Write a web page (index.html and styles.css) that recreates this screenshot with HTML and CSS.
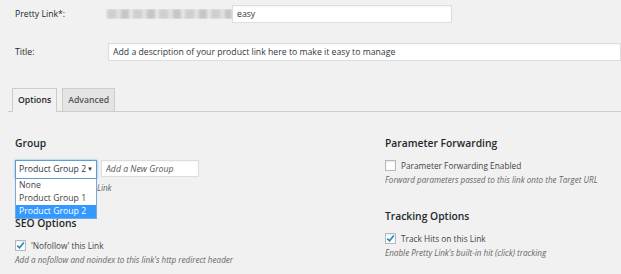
FILE: index.html
```html
<!DOCTYPE html>
<html lang="en">
<head>
    <meta charset="UTF-8">
    <title>Pretty Link - Edit Link</title>
    <link rel="stylesheet" href="styles.css">
</head>
<body>
    <div class="top-fields">
        <div class="field-row">
            <label class="field-label">Pretty Link*:</label>
            <div class="slug">
                <span class="slug-prefix"><span class="blur"></span></span>
                <input class="text-input slug-input" type="text" value="easy">
            </div>
        </div>
        <div class="field-row title-row">
            <label class="field-label">Title:</label>
            <input class="text-input title-input" type="text" value="Add a description of your product link here to make it easy to manage">
        </div>
    </div>

    <!-- Tabs -->
    <div class="tabs">
        <span class="tab active">Options</span>
        <span class="tab">Advanced</span>
    </div>

    <div class="options">
        <div class="col">
            <section class="group-section">
                <h3>Group</h3>
                <div class="group-controls">
                    <div class="select-wrap">
                        <div class="select">Product Group 2 <span class="caret">&#9660;</span></div>
                        <ul class="dropdown">
                            <li>None</li>
                            <li>Product Group 1</li>
                            <li class="selected">Product Group 2</li>
                        </ul>
                    </div>
                    <input class="text-input new-group" type="text" placeholder="Add a New Group">
                </div>
                <p class="desc group-desc">Link</p>
            </section>
            <section class="seo-section">
                <h3>SEO Options</h3>
                <label class="check">
                    <span class="box checked"><svg viewBox="0 0 12 12"><path d="M2.5 6.2 L5 8.6 L9.6 2.8" /></svg></span>
                    'Nofollow' this Link
                </label>
                <p class="desc">Add a nofollow and noindex to this link's http redirect header</p>
            </section>
        </div>
        <div class="col">
            <section class="param-section">
                <h3>Parameter Forwarding</h3>
                <label class="check">
                    <span class="box"></span>
                    Parameter Forwarding Enabled
                </label>
                <p class="desc">Forward parameters passed to this link onto the Target URL</p>
            </section>
            <section class="tracking-section">
                <h3>Tracking Options</h3>
                <label class="check">
                    <span class="box checked"><svg viewBox="0 0 12 12"><path d="M2.5 6.2 L5 8.6 L9.6 2.8" /></svg></span>
                    Track Hits on this Link
                </label>
                <p class="desc">Enable Pretty Link's built-in hit (click) tracking</p>
            </section>
        </div>
    </div>
</body>
</html>
```

FILE: styles.css
```css
* {
    margin: 0;
    padding: 0;
    box-sizing: border-box;
}

body {
    background: #f1f1f1;
    font-family: 'Open Sans', sans-serif;
    font-size: 8.7px;
    color: #444;
    overflow: hidden;
}

/* Top fields */
.top-fields {
    padding: 5px 0 0 15px;
}

.field-row {
    display: grid;
    grid-template-columns: 90px 1fr;
    align-items: center;
    height: 18px;
}

.title-row {
    margin-top: 20px;
    grid-template-columns: 93px 1fr;
}

.field-label {
    color: #23282d;
}

.text-input {
    height: 18px;
    border: 1px solid #ddd;
    background: #fff;
    font-family: inherit;
    font-size: 8.7px;
    color: #32373c;
    padding: 0 4px;
    outline: none;
    box-shadow: inset 0 1px 2px rgba(0, 0, 0, 0.04);
}

.slug {
    display: flex;
    align-items: center;
}

.slug-prefix {
    width: 127px;
    height: 10px;
    overflow: hidden;
}

.blur {
    display: block;
    height: 10px;
    margin-left: 2px;
    background: repeating-linear-gradient(90deg, #cfcfcf 0 9px, #e0e0e0 9px 14px, #c6c6c6 14px 22px, #e6e6e6 22px 26px);
    filter: blur(1px);
}

.slug-input {
    width: 220px;
}

.title-input {
    width: 100%;
}

/* Tabs */
.tabs {
    margin: 27px 0 0 8px;
    padding-left: 4px;
    display: flex;
    gap: 5px;
    border-bottom: 1px solid #ccc;
    height: 24px;
    align-items: flex-end;
}

.tab {
    display: block;
    height: 23px;
    line-height: 22px;
    padding: 0 5px;
    border: 1px solid #ccc;
    border-bottom: none;
    background: #e4e4e4;
    font-weight: 600;
    color: #555;
}

.tab.active {
    background: #f1f1f1;
    color: #23282d;
    height: 24px;
    margin-bottom: -1px;
}

/* Options */
.options {
    display: grid;
    grid-template-columns: 370px 1fr;
    padding: 25px 0 0 15px;
}

h3 {
    font-size: 10.3px;
    font-weight: 600;
    color: #23282d;
    line-height: 12px;
}

.group-controls {
    display: flex;
    gap: 4px;
    margin-top: 11px;
}

.select-wrap {
    position: relative;
}

.select {
    width: 82px;
    height: 19px;
    border: 1px solid #5b9dd9;
    background: #fff;
    color: #32373c;
    padding: 0 3px;
    line-height: 17px;
    display: flex;
    justify-content: space-between;
    box-shadow: 0 0 2px rgba(30, 140, 190, 0.6);
}

.caret {
    font-size: 6px;
    color: #333;
}

.dropdown {
    position: absolute;
    top: 19px;
    left: 0;
    width: 82px;
    list-style: none;
    background: #fff;
    border: 1px solid #7aa7d9;
    border-top: none;
    color: #444;
    z-index: 2;
}

.dropdown li {
    height: 13px;
    line-height: 13px;
    padding-left: 3px;
}

.dropdown li.selected {
    background: #3399ff;
    color: #fff;
}

.new-group {
    width: 98px;
    height: 17px;
    font-style: italic;
}

.new-group::placeholder {
    color: #555;
}

.desc {
    font-style: italic;
    color: #666;
    font-size: 8.1px;
    margin-top: 3px;
}

.group-desc {
    padding-left: 82px;
}

.check {
    display: flex;
    align-items: center;
    gap: 5px;
    margin-top: 11px;
    color: #444;
    font-size: 8.3px;
}

.box {
    width: 11px;
    height: 11px;
    border: 1px solid #b4b9be;
    background: #fff;
    display: inline-block;
    box-shadow: inset 0 1px 2px rgba(0, 0, 0, 0.1);
}

.box svg {
    width: 11px;
    height: 11px;
    display: block;
    margin: -1px 0 0 -1px;
}

.box svg path {
    fill: none;
    stroke: #1e8cbe;
    stroke-width: 1.8;
}

.seo-section {
    margin-top: 24px;
}

.tracking-section {
    margin-top: 25px;
}
```
